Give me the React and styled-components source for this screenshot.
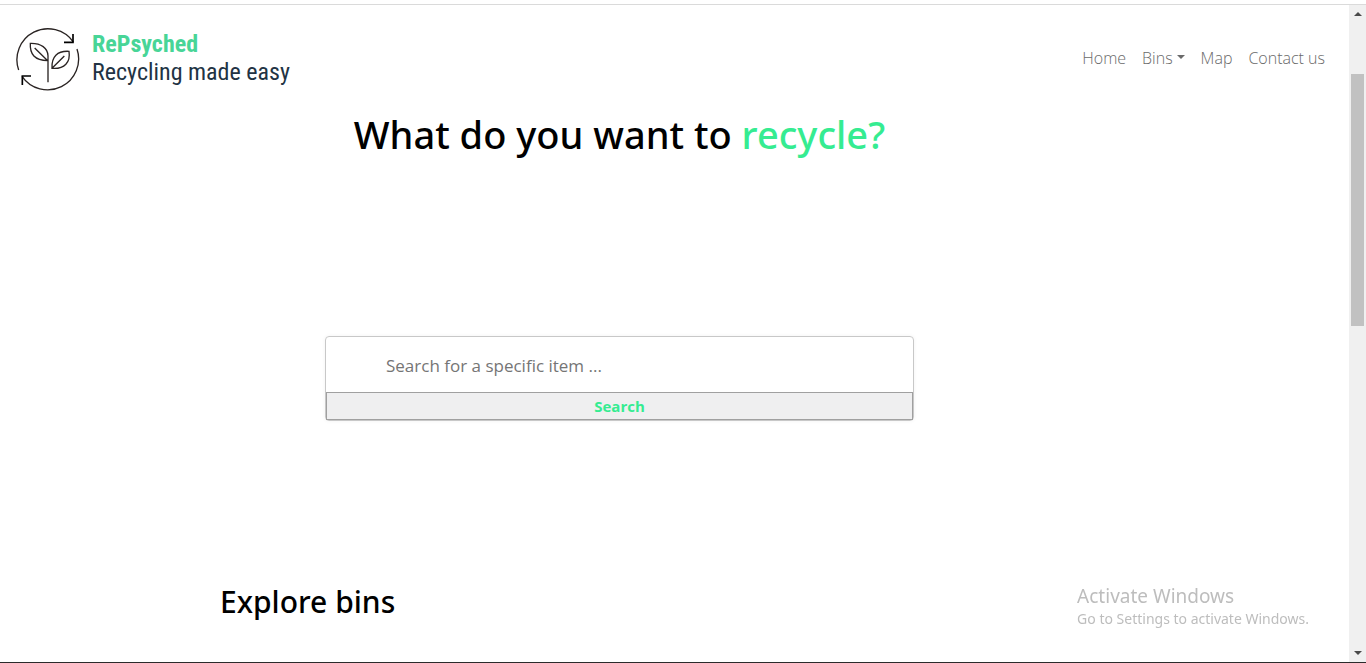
import React from "react";
import styled, { createGlobalStyle } from "styled-components";

const GlobalStyle = createGlobalStyle`
  *, *::before, *::after { box-sizing: border-box; }
  body {
    margin: 0;
    background: #fff;
    color: #000;
    font-family: "Segoe UI", "Noto Sans", "Open Sans", sans-serif;
    font-size: 16px;
    line-height: 24px;
  }
`;

const Window = styled.div`
  display: flex;
  min-height: 100vh;
  padding-top: 4px;
  border-bottom: 1px solid #2b2b2b;
`;

const Page = styled.div`
  flex: 1;
  min-width: 0;
  display: flex;
  flex-direction: column;
  border-top: 1px solid #dadada;
`;

const Header = styled.header`
  display: flex;
  align-items: center;
  justify-content: space-between;
  padding: 22px 24px 8px 16px;
`;

const Brand = styled.a`
  display: flex;
  align-items: center;
  gap: 12px;
  color: #223344;
  text-decoration: none;
  font-family: "Roboto Condensed", "Liberation Sans Narrow", Roboto, sans-serif;
  font-size: 24px;
  line-height: 28px;
`;

const BrandText = styled.span`
  padding-bottom: 2px;
`;

const BrandName = styled.strong`
  display: block;
  color: #48d597;
  font-weight: 700;
`;

const Nav = styled.nav`
  display: flex;
  gap: 16px;
  padding-bottom: 2px;
`;

const NavLink = styled.a`
  display: flex;
  align-items: center;
  gap: 4px;
  color: #6a6a6a;
  font-family: "Segoe UI", "Open Sans", "Noto Sans", sans-serif;
  font-size: 16px;
  font-weight: 300;
  text-decoration: none;
`;

const Caret = styled.span`
  margin-bottom: 2px;
  border: 4px solid transparent;
  border-top-color: currentColor;
  border-bottom: 0;
`;

const Main = styled.main`
  width: 100%;
  max-width: 1019px;
  padding-left: 220px;
`;

const Title = styled.h1`
  margin: 7px 0 0;
  font-size: 38px;
  line-height: 56px;
  font-weight: 500;
  text-align: center;
`;

const Accent = styled.span`
  color: #35ec91;
`;

const SearchForm = styled.form`
  display: flex;
  flex-direction: column;
  max-width: 589px;
  margin: 174px auto 0;
  border: 1px solid #c8c8c8;
  border-radius: 4px;
  box-shadow: 0 0 4px rgba(0, 0, 0, 0.05);
`;

const SearchInput = styled.input`
  width: 100%;
  height: 55px;
  padding: 2px 60px 0;
  border: 0;
  border-radius: 4px;
  background: transparent;
  color: #000;
  font: 400 17px/24px "Segoe UI", "Open Sans", "Noto Sans", sans-serif;
  &::placeholder { color: #757575; opacity: 1; }
`;

const SearchButton = styled.button`
  height: 28px;
  padding: 0;
  border: 1px solid #a0a0a0;
  background: #efeff0;
  color: #35ec91;
  font: 700 15px/24px "Segoe UI", "Open Sans", "Noto Sans", sans-serif;
`;

const SectionTitle = styled.h2`
  margin: 159px 0 0;
  font-size: 30px;
  line-height: 44px;
  font-weight: 500;
`;

const Notice = styled.aside`
  position: fixed;
  right: 57px;
  bottom: 34px;
  color: #bdbdbd;
  font-size: 14px;
  line-height: 20px;
`;

const NoticeTitle = styled.div`
  font-size: 19px;
  line-height: 26px;
`;

const ScrollTrack = styled.div`
  display: flex;
  flex-direction: column;
  align-items: center;
  width: 17px;
  padding: 7px 0 7px;
  border-top: 1px solid #dadada;
  background: #f0f0f0;
`;

const ScrollArrow = styled.span`
  border: 4px solid transparent;
  border-${(p) => (p.$up ? "bottom" : "top")}-color: #4a4a4a;
  border-${(p) => (p.$up ? "top" : "bottom")}-width: 0;
`;

const ScrollThumb = styled.div`
  width: 13px;
  height: 252px;
  margin: 58px 0 auto;
  background: #c1c1c1;
`;

function Logo() {
  return (
    <svg width="64" height="64" viewBox="24 21 192 192" fill="none" stroke="#2a2423" strokeWidth="4" aria-hidden="true">
      <path d="M32 150A93 93 0 0 1 196 66" />
      <path d="M207 87A93 93 0 0 1 42 169" />
      <path d="M195 42V67H168M43 195V168H69" stroke="#000" strokeWidth="5" />
      <path d="M120 187V107C119 85 100 69 67 70C65 103 80 121 119 122M80 84L119 122" />
      <path d="M183 94C148 92 130 110 132 145C170 148 188 126 183 94ZM132 145L169 108" />
    </svg>
  );
}

export default function App() {
  return (
    <>
      <GlobalStyle />
      <Window>
        <Page>
          <Header>
            <Brand href="#">
              <Logo />
              <BrandText>
                <BrandName>RePsyched</BrandName>
                Recycling made easy
              </BrandText>
            </Brand>
            <Nav>
              <NavLink href="#">Home</NavLink>
              <NavLink href="#bins">Bins<Caret /></NavLink>
              <NavLink href="#map">Map</NavLink>
              <NavLink href="#contact">Contact us</NavLink>
            </Nav>
          </Header>
          <Main>
            <Title>
              What do you want to <Accent>recycle?</Accent>
            </Title>
            <SearchForm onSubmit={(e) => e.preventDefault()}>
              <SearchInput type="text" aria-label="Search for a specific item" placeholder="Search for a specific item ..." />
              <SearchButton type="submit">Search</SearchButton>
            </SearchForm>
            <SectionTitle id="bins">Explore bins</SectionTitle>
          </Main>
        </Page>
        <ScrollTrack aria-hidden="true">
          <ScrollArrow $up />
          <ScrollThumb />
          <ScrollArrow />
        </ScrollTrack>
      </Window>
      <Notice>
        <NoticeTitle>Activate Windows</NoticeTitle>
        Go to Settings to activate Windows.
      </Notice>
    </>
  );
}
